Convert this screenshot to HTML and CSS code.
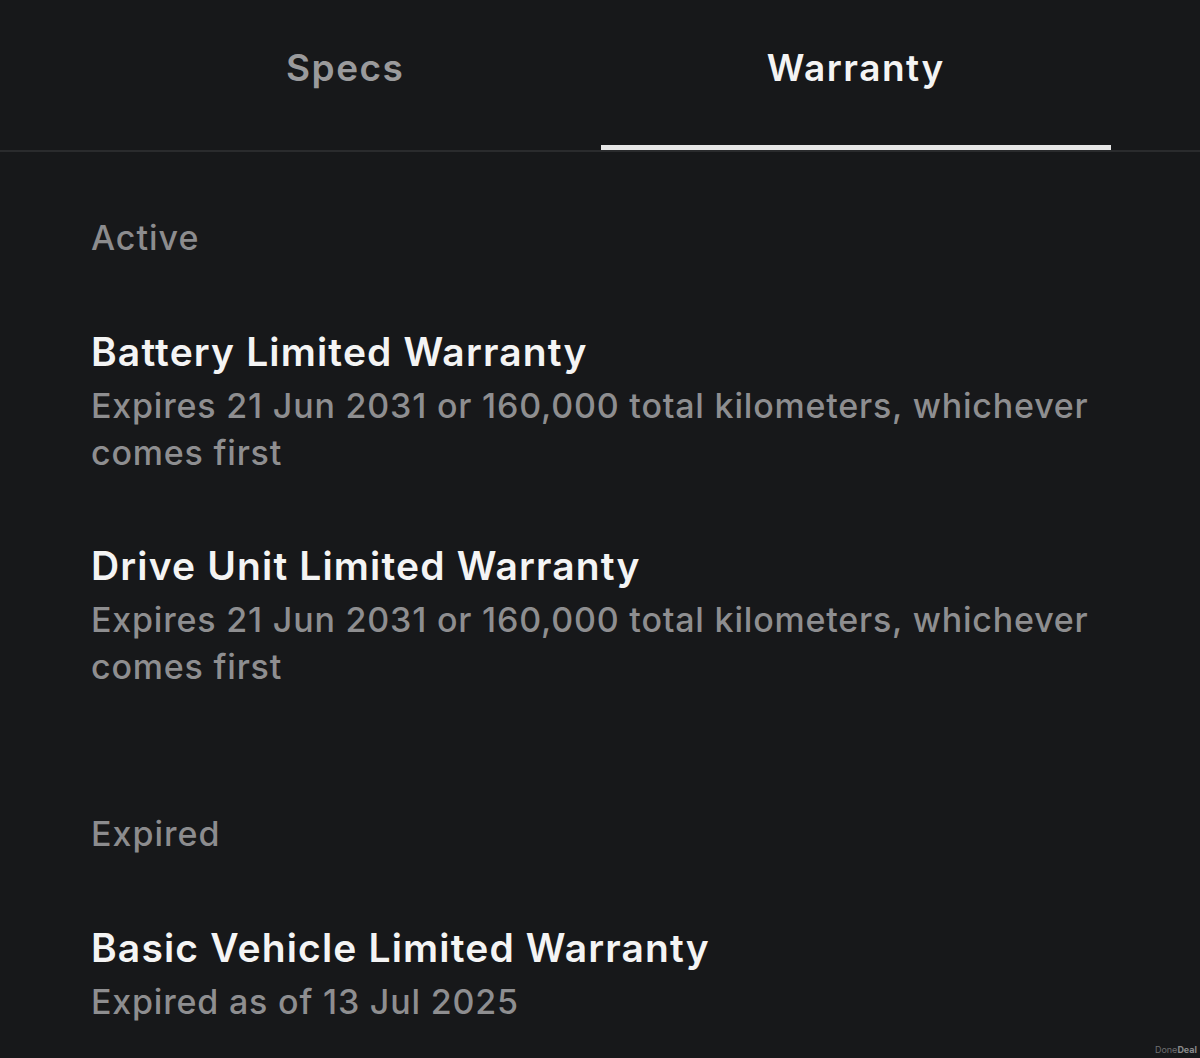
FILE: index.html
```html
<!DOCTYPE html>
<html lang="en">
<head>
  <meta charset="UTF-8" />
  <meta name="viewport" content="width=device-width, initial-scale=1.0"/>
  <title>Warranty</title>
  <link rel="stylesheet" href="styles.css">
</head>
<body>
  <nav class="tabs">
    <div class="tab">Specs</div>
    <div class="tab active">Warranty</div>
  </nav>

  <main class="content">
    <section class="group">
      <h3 class="group-label">Active</h3>
      <div class="item">
        <h2>Battery Limited Warranty</h2>
        <p>Expires 21 Jun 2031 or 160,000 total kilometers, whichever comes first</p>
      </div>
      <div class="item">
        <h2>Drive Unit Limited Warranty</h2>
        <p>Expires 21 Jun 2031 or 160,000 total kilometers, whichever comes first</p>
      </div>
    </section>

    <section class="group">
      <h3 class="group-label">Expired</h3>
      <div class="item">
        <h2>Basic Vehicle Limited Warranty</h2>
        <p>Expired as of 13 Jul 2025</p>
      </div>
    </section>
  </main>

  <div class="watermark">Done<b>Deal</b></div>
</body>
</html>
```

FILE: styles.css
```css
body {
  font-family: Inter, "Liberation Sans", sans-serif;
  background-color: #17181a;
  color: #f4f4f4;
  margin: 0;
  height: 1058px;
  overflow: hidden;
  position: relative;
}

.tabs {
  display: flex;
  padding: 0 89px 0 90px;
  border-bottom: 2px solid #2a2b2d;
}

.tab {
  flex: 1;
  text-align: center;
  font-size: 37px;
  font-weight: 600;
  letter-spacing: 1.5px;
  line-height: 48px;
  padding: 44px 0 58px;
  color: #9a9a9c;
  position: relative;
}

.tab.active {
  color: #f4f4f4;
}

.tab.active::after {
  content: "";
  position: absolute;
  left: 0;
  right: 0;
  bottom: 0;
  height: 5px;
  background-color: #e6e6e6;
}

.content {
  padding: 66px 89px 0 91px;
}

.group {
  margin-bottom: 124px;
}

.group:last-child {
  margin-bottom: 0;
}

.group-label {
  margin: 0 0 70px;
  font-size: 34px;
  font-weight: 500;
  letter-spacing: 1px;
  line-height: 40px;
  color: #8c8c8e;
}

.item {
  margin-bottom: 66px;
}

.item:last-child {
  margin-bottom: 0;
}

.item h2 {
  margin: 0 0 6px;
  font-size: 39px;
  font-weight: 600;
  letter-spacing: 1.15px;
  line-height: 48px;
  color: #f4f4f4;
}

.item p {
  margin: 0;
  font-size: 34px;
  font-weight: 500;
  letter-spacing: 0.8px;
  line-height: 47px;
  color: #8e8e90;
}

.watermark {
  position: absolute;
  right: 3px;
  bottom: 3px;
  font-size: 9px;
  color: #6e6e70;
}

.watermark b {
  color: #8a8a8c;
}
```
